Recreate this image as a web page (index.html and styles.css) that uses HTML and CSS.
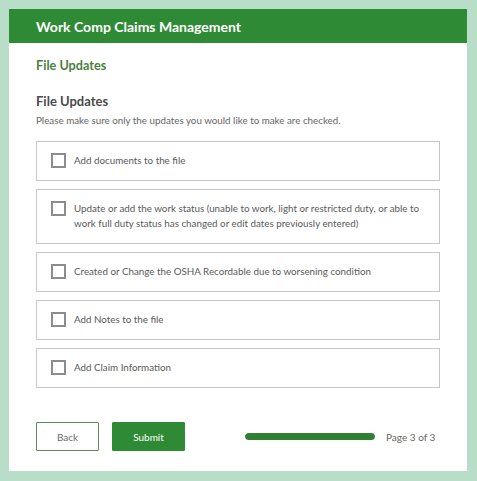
FILE: index.html
```html
<!DOCTYPE html>
<html>
<head>
<meta charset="utf-8">
<link rel="stylesheet" href="styles.css">
</head>
<body>
<div class="card">
  <header class="topbar">Work Comp Claims Management</header>
  <main class="content">
    <h2 class="page-title">File Updates</h2>
    <h3 class="section-title">File Updates</h3>
    <p class="hint">Please make sure only the updates you would like to make are checked.</p>
    <div class="options">
      <label class="option"><span class="box"></span><span class="label">Add documents to the file</span></label>
      <label class="option"><span class="box"></span><span class="label">Update or add the work status (unable to work, light or restricted duty, or able to work full duty status has changed or edit dates previously entered)</span></label>
      <label class="option"><span class="box"></span><span class="label">Created or Change the OSHA Recordable due to worsening condition</span></label>
      <label class="option"><span class="box"></span><span class="label">Add Notes to the file</span></label>
      <label class="option"><span class="box"></span><span class="label">Add Claim Information</span></label>
    </div>
    <div class="footer">
      <button class="btn btn-back">Back</button>
      <button class="btn btn-submit">Submit</button>
      <div class="progress"><div class="bar"></div></div>
      <span class="page">Page 3 of 3</span>
    </div>
  </main>
</div>
</body>
</html>
```
FILE: styles.css
```css
* { box-sizing: border-box; }
html, body { margin: 0; padding: 0; }
body {
  background: #b8dec9;
  padding: 9px 10px 10px 9px;
  font-family: Lato, "Open Sans", sans-serif;
  width: 477px;
  height: 481px;
}
.card {
  background: #fff;
  width: 458px;
  height: 462px;
  display: flex;
  flex-direction: column;
}
.topbar {
  background: #2f8a35;
  color: #fff;
  height: 34px;
  padding-left: 27px;
  display: flex;
  align-items: center;
  font-size: 14px;
  font-weight: 700;
}
.content {
  padding: 14px 27px 0 27px;
}
.page-title {
  margin: 0;
  font-size: 12.7px;
  line-height: 16px;
  font-weight: 700;
  color: #4b7f40;
}
.section-title {
  margin: 19px 0 0 0;
  font-size: 13px;
  line-height: 18px;
  font-weight: 700;
  color: #4a4a4a;
}
.hint {
  margin: 4px 0 0 0;
  font-size: 9.8px;
  line-height: 12px;
  color: #666;
}
.options {
  margin-top: 15px;
  display: flex;
  flex-direction: column;
  gap: 8px;
}
.option {
  display: flex;
  align-items: flex-start;
  gap: 8px;
  border: 1px solid #c6c6c6;
  padding: 11px 14px 12px 14px;
}
.box {
  flex: none;
  width: 15px;
  height: 15px;
  border: 2px solid #8c8c8c;
}
.label {
  font-size: 9.8px;
  line-height: 15px;
  color: #5a5a5a;
}
.footer {
  margin-top: 34px;
  display: flex;
  align-items: center;
  height: 29px;
}
.btn {
  font-family: inherit;
  font-size: 10px;
  height: 29px;
  border-radius: 1px;
  cursor: pointer;
}
.btn-back {
  width: 63px;
  background: #fff;
  border: 1px solid #5b8d58;
  color: #6b6b6b;
}
.btn-submit {
  width: 73px;
  margin-left: 13px;
  background: #2f8a35;
  border: 1px solid #2f8a35;
  color: #fff;
}
.progress {
  margin-left: 60px;
  width: 130px;
  height: 7px;
  border-radius: 4px;
  background: #e2e2e2;
  overflow: hidden;
}
.bar {
  width: 100%;
  height: 100%;
  background: #2f7f33;
  border-radius: 4px;
}
.page {
  margin-left: 11px;
  font-size: 10px;
  color: #666;
}
```
